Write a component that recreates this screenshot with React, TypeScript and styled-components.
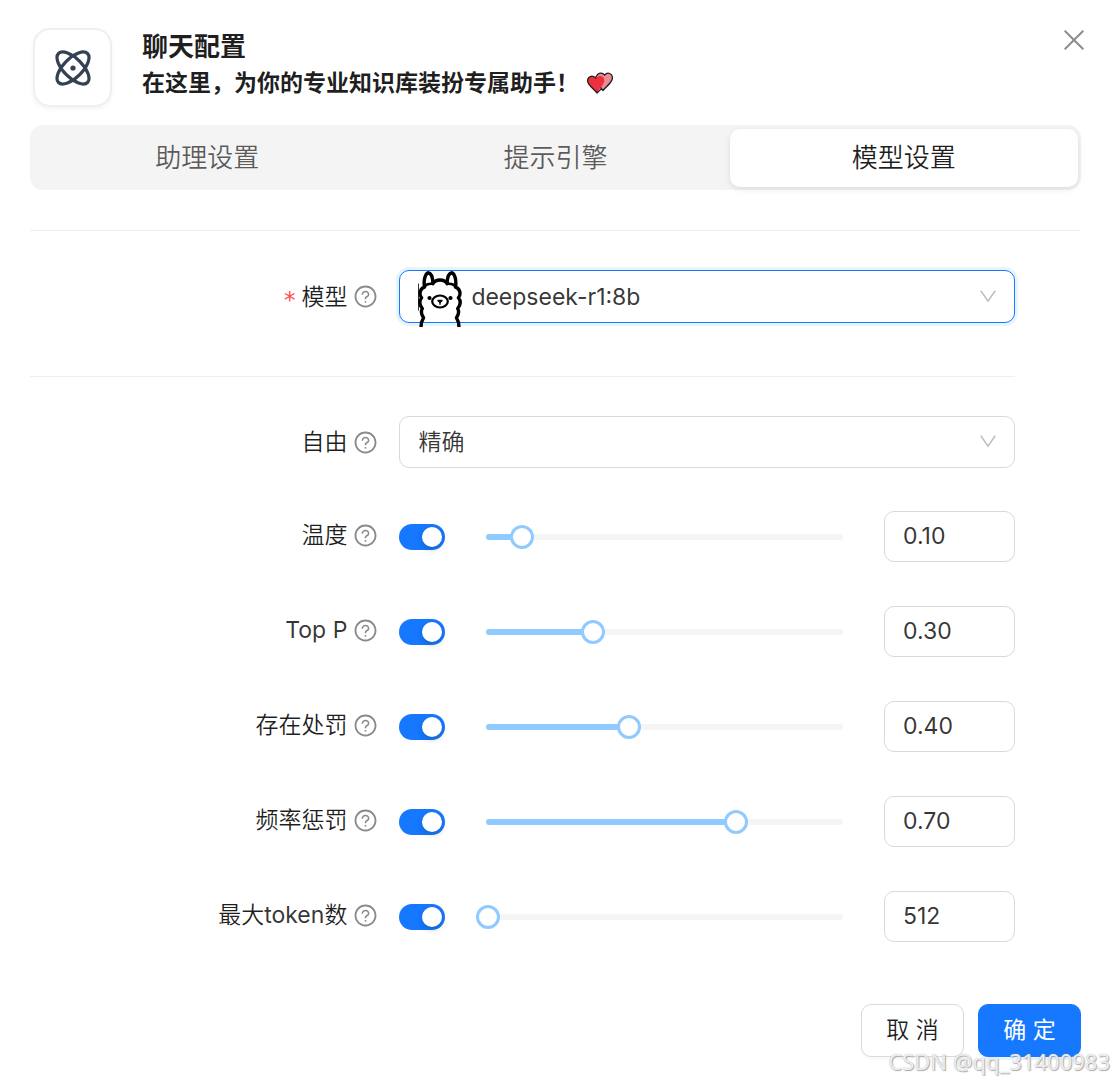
import React, { useState } from 'react';
import styled, { createGlobalStyle } from 'styled-components';
import { AiOutlineQuestionCircle } from 'react-icons/ai';

const GlobalStyle = createGlobalStyle`
  *, *::before, *::after { box-sizing: border-box; }
  body {
    margin: 0;
    background: #fff;
    color: rgba(0, 0, 0, 0.88);
    font-family: Inter, 'Noto Sans CJK SC', sans-serif;
    font-size: 23px;
    line-height: 36px;
  }
  button, input, select { font: inherit; color: inherit; }
`;

const Dialog = styled.main`
  position: relative;
  padding: 28px 32px 25px 30px;
`;

const CloseButton = styled.button`
  position: absolute;
  top: 24px;
  right: 23px;
  width: 32px;
  height: 32px;
  padding: 6px;
  border: 0;
  background: none;
  color: #8c8c8c;
  cursor: pointer;
  svg { display: block; }
`;

const Header = styled.header`
  display: flex;
  align-items: center;
  gap: 30px;
  padding-left: 3px;
`;

const LogoBox = styled.div`
  display: grid;
  place-items: center;
  width: 79px;
  height: 79px;
  border: 2px solid #eeeff4;
  border-radius: 17px;
  box-shadow: 0 2px 4px rgba(16, 24, 40, 0.05);
`;

const Heading = styled.div`
  display: flex;
  flex-direction: column;
  padding-bottom: 5px;
  font-weight: 700;
`;

const Title = styled.h1`
  margin: 0;
  font-size: 26px;
  line-height: 36px;
`;

const Subtitle = styled.p`
  display: flex;
  align-items: center;
  gap: 8px;
  margin: 0;
`;

const Tabs = styled.div`
  display: grid;
  grid-template-columns: repeat(3, 1fr);
  margin-top: 18px;
  padding: 4px 3px 3px;
  border-radius: 13px;
  background: #f4f4f4;
`;

const Tab = styled.button<{ $active?: boolean }>`
  height: 58px;
  padding: 0;
  border: 0;
  border-radius: 10px;
  font-size: 26px;
  font-weight: 350;
  color: ${(p) => (p.$active ? 'rgba(0, 0, 0, 0.88)' : 'rgba(0, 0, 0, 0.65)')};
  background: ${(p) => (p.$active ? '#fff' : 'transparent')};
  box-shadow: ${(p) => (p.$active ? '0 2px 6px rgba(0, 0, 0, 0.1)' : 'none')};
  cursor: pointer;
`;

const Divider = styled.hr`
  width: 100%;
  height: 1px;
  margin: 40px 0 39px;
  border: 0;
  background: #efefef;
`;

const Form = styled.form`
  display: flex;
  flex-direction: column;
`;

const Fields = styled.div`
  display: flex;
  flex-direction: column;
  padding-right: 66px;
`;

const Section = styled.div`
  display: flex;
  flex-direction: column;
  padding-bottom: 13px;
`;

const Sliders = styled.div`
  display: flex;
  flex-direction: column;
  gap: 44px;
  margin-top: 43px;
`;

const Row = styled.div`
  display: grid;
  grid-template-columns: 9fr 15fr;
  align-items: center;
`;

const LabelCell = styled.div<{ $raised?: boolean }>`
  display: flex;
  align-items: center;
  justify-content: flex-end;
  gap: 6px;
  padding: 0 21px ${(p) => (p.$raised ? 3 : 0)}px 0;
  svg { color: #8a8a8a; }
`;

const Label = styled.label`
  font-weight: 350;
  white-space: nowrap;
`;

const Latin = styled.span`
  color: rgba(0, 0, 0, 0.8);
  font-weight: 400;
`;

const Required = styled.span`
  padding-top: 6px;
  color: #ff4d4f;
  font-family: 'DejaVu Sans', sans-serif;
`;

const SelectWrap = styled.div`
  position: relative;
  display: flex;
`;

const Select = styled.select<{ $focused?: boolean }>`
  width: 100%;
  height: ${(p) => (p.$focused ? 53 : 52)}px;
  padding: 0 60px 0 ${(p) => (p.$focused ? 71 : 18)}px;
  border: 1px solid ${(p) => (p.$focused ? '#1677ff' : '#d9d9d9')};
  border-radius: 10px;
  background: #fff;
  box-shadow: ${(p) => (p.$focused ? '0 0 0 3px #e6f4ff' : 'none')};
  color: rgba(0, 0, 0, 0.8);
  font-weight: ${(p) => (p.$focused ? 400 : 350)};
  appearance: none;
  outline: none;
`;

const Arrow = styled.svg`
  position: absolute;
  top: 50%;
  right: 19px;
  margin-top: -7px;
  pointer-events: none;
`;

const ModelIcon = styled.svg`
  position: absolute;
  left: 17px;
  top: 0;
  pointer-events: none;
`;

const Controls = styled.div`
  display: flex;
  align-items: center;
  gap: 41px;
`;

const Switch = styled.input`
  flex: none;
  width: 46px;
  height: 26px;
  margin: 0;
  padding: 3px;
  border-radius: 13px;
  background: #bfbfbf;
  appearance: none;
  cursor: pointer;
  &::before {
    content: '';
    display: block;
    width: 20px;
    height: 20px;
    border-radius: 50%;
    background: #fff;
    box-shadow: 0 3px 6px rgba(0, 35, 11, 0.2);
  }
  &:checked { background: #1677ff; }
  &:checked::before { margin-left: auto; }
`;

const SliderBox = styled.div`
  flex: 1;
  display: grid;
  align-items: center;
  min-width: 0;
  & > * { grid-area: 1 / 1; }
`;

const Rail = styled.div`
  height: 6px;
  border-radius: 3px;
  background: #f5f5f5;
`;

const Fill = styled.div`
  height: 100%;
  border-radius: 3px;
  background: #91caff;
`;

const Range = styled.input`
  width: calc(100% + 24px);
  height: 24px;
  margin: 0 -12px;
  background: transparent;
  appearance: none;
  cursor: pointer;
  &::-webkit-slider-thumb {
    width: 24px;
    height: 24px;
    border: 3px solid #91caff;
    border-radius: 50%;
    background: #fff;
    appearance: none;
  }
`;

const NumberBox = styled.input`
  flex: none;
  width: 131px;
  height: 51px;
  padding: 0 18px 2px;
  border: 1px solid #d9d9d9;
  border-radius: 10px;
  background: #fff;
  color: rgba(0, 0, 0, 0.8);
  outline: none;
`;

const Footer = styled.footer`
  display: flex;
  justify-content: flex-end;
  gap: 14px;
  margin-top: 62px;
`;

const Button = styled.button<{ $primary?: boolean }>`
  width: 103px;
  height: 53px;
  padding: 0 0 2px;
  border: 1px solid ${(p) => (p.$primary ? '#1677ff' : '#d9d9d9')};
  border-radius: 10px;
  background: ${(p) => (p.$primary ? '#1677ff' : '#fff')};
  color: ${(p) => (p.$primary ? '#fff' : 'inherit')};
  font-weight: ${(p) => (p.$primary ? 400 : 350)};
  box-shadow: 0 3px 0 ${(p) => (p.$primary ? 'rgba(5, 145, 255, 0.1)' : 'rgba(0, 0, 0, 0.02)')};
  cursor: pointer;
`;

const Watermark = styled.div`
  position: absolute;
  right: 3px;
  bottom: 3px;
  color: rgba(255, 255, 255, 0.8);
  font-family: 'Noto Sans', sans-serif;
  font-size: 22px;
  text-shadow: 0 0 1px #aaa, 1px 1px 1px #aaa;
  pointer-events: none;
`;

const AtomLogo = () => (
  <svg width="38" height="38" viewBox="0 0 38 38" fill="none" stroke="#344054" strokeWidth="3.2" aria-hidden="true">
    <ellipse cx="19" cy="19" rx="20.5" ry="9.5" transform="rotate(45 19 19)" />
    <ellipse cx="19" cy="19" rx="20.5" ry="9.5" transform="rotate(-45 19 19)" />
    <circle cx="19" cy="19" r="2.6" fill="#344054" stroke="none" />
  </svg>
);

const Hearts = () => (
  <svg width="26" height="22" viewBox="0 0 26 22" stroke="#231f20" strokeWidth="1.3" strokeLinejoin="round" aria-hidden="true">
    <path d="M16 18.5 9 10C7.600 6 9.500 2 13 1.200c2-.4 3.600.6 4.600 2C19 1.400 21 .9 22.700 1.500c2.800 1 3.300 4.300 2 6.900C23 12 19.500 14.500 16 18.500Z" fill="#ea8c95" />
    <path d="M10 21C7 17 2.500 14.300 1.100 10.800-.1 7.700 1.300 4.900 4 4.300c2-.4 3.800.5 4.900 2.200C10 4.400 12 3.500 14 4.100c3 .9 4 4 2.700 6.900C15.200 14.500 12 17 10 21Z" fill="#ef2f3c" stroke="none" />
    <path d="M14.500 16.800C13 18 11.500 19.200 10 21 7 17 2.500 14.300 1.100 10.800-.1 7.700 1.300 4.900 4 4.300c2-.4 3.800.5 4.900 2.200" fill="none" />
  </svg>
);

const Llama = () => (
  <ModelIcon width="48" height="57" viewBox="0 0 48 57" fill="none" stroke="#000" strokeWidth="3.4" strokeLinejoin="round" aria-hidden="true">
    <path d="M2.500 13.500v27" strokeWidth="1" stroke="#333" />
    <path d="M5 57c0-4 .8-6.500 2.500-9.200C5.500 45 4.500 42 6.300 38.500 3.500 35 3 31 5.600 27.800 2.500 24 4.200 18.500 8.500 17.200 7.500 11 8.800 4 12 2.800c3.300.4 4.800 5 4.900 11 1.200-2.500 4-3.800 7.100-3.800s5.900 1.300 7.100 3.800C31.200 7.800 32.700 3.200 36 2.800c3.200 1.200 4.500 8.200 3.500 14.400 4.300 1.300 6 6.800 2.900 10.600 2.600 3.200 2.100 7.200-.7 10.700 1.800 3.500.8 6.500-1.200 9.300C42.200 50.500 43 53 43 57" />
    <path d="M8.500 17.200c.8-2.200 4-3.800 8.400-3.400M39.500 17.200c-.8-2.200-4-3.800-8.400-3.400" strokeWidth="2.600" />
    <ellipse cx="24" cy="31.500" rx="7.800" ry="6" strokeWidth="2.200" />
    <path d="M22 30.500h4l-2 2Zm2 2v2.200" strokeWidth="1.400" fill="#000" />
    <circle cx="13.500" cy="28" r="2.100" fill="#000" stroke="none" />
    <circle cx="34.500" cy="28" r="2.100" fill="#000" stroke="none" />
  </ModelIcon>
);

const DownArrow = () => (
  <Arrow width="16" height="13" viewBox="0 0 16 13" fill="none" stroke="#bfbfbf" strokeWidth="1.600" aria-hidden="true">
    <path d="M.8.8 8 11.200 15.200.8" />
  </Arrow>
);

interface FieldLabelProps {
  id: string;
  required?: boolean;
  raised?: boolean;
  children: React.ReactNode;
}

const FieldLabel = ({ id, required, raised, children }: FieldLabelProps) => (
  <LabelCell $raised={raised}>
    {required && <Required>*</Required>}
    <Label htmlFor={id}>{children}</Label>
    <AiOutlineQuestionCircle size={25} />
  </LabelCell>
);

interface SliderRowProps {
  id: string;
  label: React.ReactNode;
  name: string;
  initial: number;
  max: number;
  step: number;
  digits: number;
}

const SliderRow = ({ id, label, name, initial, max, step, digits }: SliderRowProps) => {
  const [value, setValue] = useState(initial);
  const [enabled, setEnabled] = useState(true);
  return (
    <Row>
      <FieldLabel id={id} raised>{label}</FieldLabel>
      <Controls>
        <Switch type="checkbox" role="switch" aria-label={name} checked={enabled} onChange={(e) => setEnabled(e.target.checked)} />
        <SliderBox>
          <Rail>
            <Fill style={{ width: `${(value / max) * 100}%` }} />
          </Rail>
          <Range type="range" aria-label={name} min={0} max={max} step={step} value={value} disabled={!enabled} onChange={(e) => setValue(Number(e.target.value))} />
        </SliderBox>
        <NumberBox
          id={id}
          inputMode="decimal"
          value={value.toFixed(digits)}
          disabled={!enabled}
          onChange={(e) => setValue(Math.min(max, Number(e.target.value) || 0))}
        />
      </Controls>
    </Row>
  );
};

const sliders: SliderRowProps[] = [
  { id: 'temperature', label: '温度', name: '温度', initial: 0.1, max: 1, step: 0.01, digits: 2 },
  { id: 'top-p', label: <Latin>Top P</Latin>, name: 'Top P', initial: 0.3, max: 1, step: 0.01, digits: 2 },
  { id: 'presence', label: '存在处罚', name: '存在处罚', initial: 0.4, max: 1, step: 0.01, digits: 2 },
  { id: 'frequency', label: '频率惩罚', name: '频率惩罚', initial: 0.7, max: 1, step: 0.01, digits: 2 },
  { id: 'max-tokens', label: <>最大<Latin>token</Latin>数</>, name: '最大token数', initial: 512, max: 128000, step: 1, digits: 0 },
];

export default function App() {
  return (
    <>
      <GlobalStyle />
      <Dialog>
        <Header>
          <LogoBox><AtomLogo /></LogoBox>
          <Heading>
            <Title>聊天配置</Title>
            <Subtitle>在这里，为你的专业知识库装扮专属助手！<Hearts /></Subtitle>
          </Heading>
        </Header>
        <CloseButton type="button" aria-label="关闭">
          <svg width="20" height="20" viewBox="0 0 20 20" stroke="currentColor" strokeWidth="2" aria-hidden="true">
            <path d="M.7.7 19.300 19.300M19.300.7.7 19.300" />
          </svg>
        </CloseButton>
        <Tabs role="tablist">
          <Tab type="button" role="tab">助理设置</Tab>
          <Tab type="button" role="tab">提示引擎</Tab>
          <Tab type="button" role="tab" aria-selected="true" $active>模型设置</Tab>
        </Tabs>
        <Form onSubmit={(e) => e.preventDefault()}>
          <Divider />
          <Fields>
            <Section>
              <Row>
                <FieldLabel id="model" required>模型</FieldLabel>
                <SelectWrap>
                  <Select id="model" $focused>
                    <option>deepseek-r1:8b</option>
                  </Select>
                  <Llama />
                  <DownArrow />
                </SelectWrap>
              </Row>
            </Section>
            <Divider />
            <Row>
              <FieldLabel id="freedom">自由</FieldLabel>
              <SelectWrap>
                <Select id="freedom">
                  <option>精确</option>
                </Select>
                <DownArrow />
              </SelectWrap>
            </Row>
            <Sliders>
              {sliders.map((s) => (
                <SliderRow key={s.id} {...s} />
              ))}
            </Sliders>
          </Fields>
          <Footer>
            <Button type="button">取 消</Button>
            <Button type="submit" $primary>确 定</Button>
          </Footer>
        </Form>
        <Watermark>CSDN @qq_31400983</Watermark>
      </Dialog>
    </>
  );
}
